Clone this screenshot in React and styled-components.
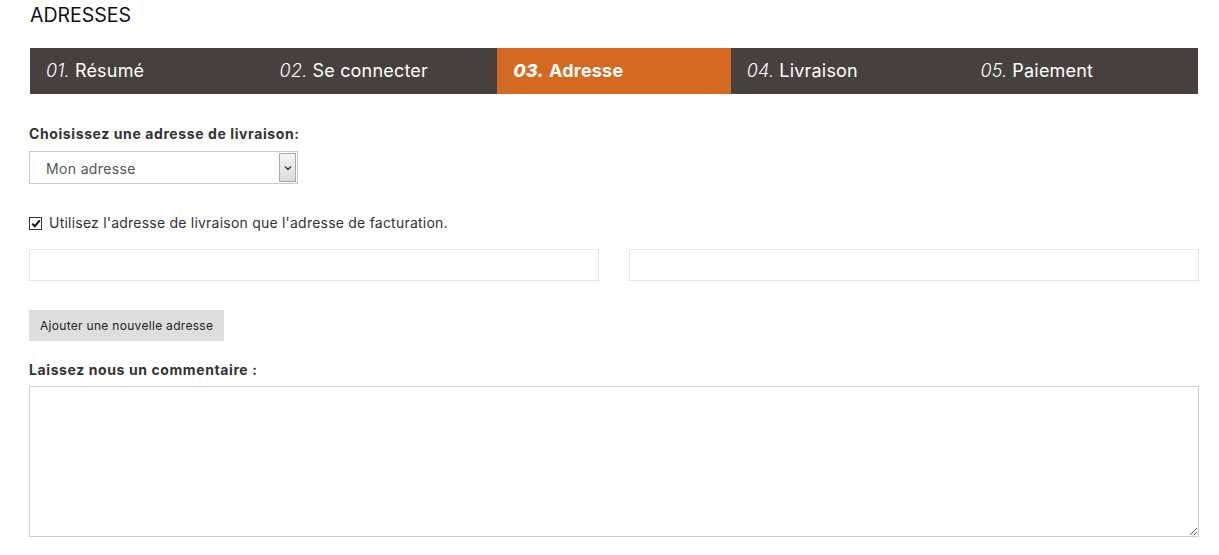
import React from "react";
import styled, { createGlobalStyle } from "styled-components";

const Global = createGlobalStyle`
  html, body { margin: 0; padding: 0; background: #fff; }
  body { font-family: Inter, "Noto Sans", sans-serif; color: #333; }
  * { box-sizing: border-box; }
`;

const Page = styled.div`
  width: 1219px;
  padding: 3px 20px 0 29px;
  display: flex;
  flex-direction: column;
`;

const Title = styled.h1`
  margin: 0 0 0 1px;
  font-size: 19.5px;
  font-weight: 400;
  color: #111;
  line-height: 24px;
  letter-spacing: 0;
`;

const Steps = styled.ol`
  list-style: none;
  margin: 21px 0 0 1px;
  padding: 0;
  width: 1168px;
  height: 46px;
  display: grid;
  grid-template-columns: repeat(5, 1fr);
  background: #46413f;
`;

const Step = styled.li`
  display: flex;
  align-items: center;
  padding-left: 16px;
  padding-bottom: 2px;
  font-size: 18px;
  color: #fff;
  background: ${(p) => (p.$active ? "#d46a21" : "transparent")};
  font-weight: ${(p) => (p.$active ? 700 : 400)};
  letter-spacing: 0.2px;
  em {
    font-style: italic;
    margin-right: 5px;
    font-weight: ${(p) => (p.$active ? 800 : 300)};
  }
`;

const Section = styled.div`
  display: flex;
  flex-direction: column;
  margin-top: ${(p) => p.$mt || 0}px;
`;

const Label = styled.label`
  font-size: 14px;
  font-weight: 700;
  color: #333;
  line-height: 18px;
  letter-spacing: 0.6px;
`;

const SelectBox = styled.div`
  margin-top: 8px;
  width: 269px;
  height: 33px;
  border: 1px solid #c9c9c9;
  display: flex;
  background: #fff;
`;

const Select = styled.select`
  appearance: none;
  border: none;
  outline: none;
  flex: 1;
  background: transparent;
  font-family: inherit;
  font-size: 14px;
  letter-spacing: 0.35px;
  color: #555;
  padding: 2px 0 0 16px;
`;

const Arrow = styled.span`
  width: 17px;
  margin: 1px;
  border: 1px solid #a9a9a9;
  background: linear-gradient(#f4f4f4, #dcdcdc);
  display: flex;
  align-items: center;
  justify-content: center;
`;

const CheckRow = styled.label`
  margin-top: 30px;
  display: flex;
  align-items: center;
  gap: 7px;
  font-size: 14px;
  color: #333;
  line-height: 18px;
  letter-spacing: 0.22px;
`;

const Box = styled.span`
  width: 13px;
  height: 13px;
  border: 1px solid #333;
  display: flex;
  align-items: center;
  justify-content: center;
  background: #fff;
`;

const Inputs = styled.div`
  margin-top: 17px;
  display: grid;
  grid-template-columns: 570px 570px;
  gap: 30px;
`;

const Input = styled.input`
  height: 32px;
  border: 1px solid #e6e6e6;
  outline: none;
  padding: 0 10px;
  font-family: inherit;
`;

const Button = styled.button`
  margin-top: 29px;
  align-self: flex-start;
  width: 195px;
  height: 31px;
  border: none;
  background: #dedede;
  font-family: inherit;
  font-size: 12px;
  color: #222;
  padding: 0 0 0 11px;
  text-align: left;
  letter-spacing: 0.3px;
`;

const TextArea = styled.textarea`
  margin-top: 7px;
  width: 1170px;
  height: 151px;
  border: 1px solid #cfcfcf;
  outline: none;
  font-family: inherit;
`;

const steps = [
  { n: "01.", t: "Résumé" },
  { n: "02.", t: "Se connecter" },
  { n: "03.", t: "Adresse", active: true },
  { n: "04.", t: "Livraison" },
  { n: "05.", t: "Paiement" },
];

export default function App() {
  return (
    <>
      <Global />
      <Page>
        <Title>ADRESSES</Title>
        <Steps>
          {steps.map((s) => (
            <Step key={s.n} $active={s.active}>
              <em>{s.n}</em>
              {s.t}
            </Step>
          ))}
        </Steps>
        <Section $mt={31}>
          <Label>Choisissez une adresse de livraison:</Label>
          <SelectBox>
            <Select defaultValue="mon">
              <option value="mon">Mon adresse</option>
            </Select>
            <Arrow>
              <svg width="8" height="6" viewBox="0 0 8 6">
                <path d="M1 1.5 L4 4.5 L7 1.5" fill="none" stroke="#444" strokeWidth="1.6" />
              </svg>
            </Arrow>
          </SelectBox>
        </Section>
        <CheckRow>
          <Box>
            <svg width="10" height="9" viewBox="0 0 10 9">
              <path d="M1.2 4.6 L3.8 7.2 L8.8 1.4" fill="none" stroke="#111" strokeWidth="2" />
            </svg>
          </Box>
          Utilisez l'adresse de livraison que l'adresse de facturation.
        </CheckRow>
        <Inputs>
          <Input />
          <Input />
        </Inputs>
        <Button>Ajouter une nouvelle adresse</Button>
        <Section $mt={20}>
          <Label>Laissez nous un commentaire :</Label>
          <TextArea />
        </Section>
      </Page>
    </>
  );
}
